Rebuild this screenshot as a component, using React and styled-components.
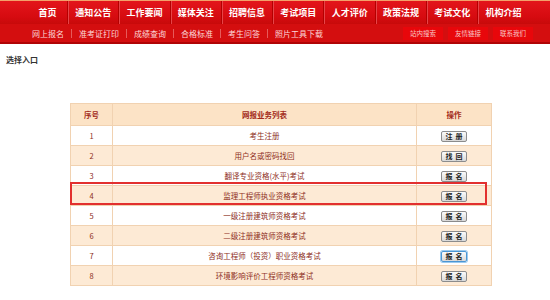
import React from 'react';
import styled, { createGlobalStyle } from 'styled-components';

const Global = createGlobalStyle`
  *, *::before, *::after { box-sizing: border-box; }
  html, body { margin: 0; padding: 0; background: #fff; }
  body { font-family: "Noto Sans CJK SC", "Noto Sans", sans-serif; }
`;

const Page = styled.div`
  width: 550px;
  height: 300px;
  overflow: hidden;
`;

const TopNav = styled.nav`
  height: 24px;
  border-top: 1px solid #f3a06a;
  background: linear-gradient(#e3151b, #d60b10 70%, #c70a0a);
  display: flex;
  align-items: stretch;
  padding-left: 28px;
`;

const NavItem = styled.a`
  width: ${p => p.$w || 51.3}px;
  flex: none;
  display: flex;
  align-items: center;
  justify-content: center;
  color: #fff;
  font-size: 9px;
  font-weight: bold;
  text-decoration: none;
  & + & {
    border-left: 1px solid #b40000;
    box-shadow: inset 1px 0 0 #e64448;
  }
`;

const SubNav = styled.div`
  height: 20px;
  background: #d40e0f;
  border-bottom: 2px solid #b00405;
  display: flex;
  align-items: center;
  padding: 0 17px 0 25px;
`;

const SubItem = styled.a`
  font-size: 8px;
  line-height: 9px;
  color: #fcd8d8;
  padding: 0 7px;
  text-decoration: none;
  & + & { border-left: 1px solid #e65a5a; }
`;

const QuickLinks = styled.div`
  margin-left: auto;
  display: flex;
  gap: 5px;
`;

const QuickLink = styled.a`
  width: 40px;
  height: 13px;
  background: #e8070b;
  color: #f8c6c6;
  font-size: 6.5px;
  display: flex;
  align-items: center;
  justify-content: center;
  text-decoration: none;
`;

const Title = styled.h2`
  margin: 0;
  padding: 11px 0 0 6px;
  font-size: 8px;
  line-height: 10px;
  font-weight: bold;
  color: #333;
`;

const TableWrap = styled.div`
  position: relative;
  width: 421px;
  margin: 38px 0 0 70px;
`;

const Table = styled.table`
  width: 421px;
  border-collapse: collapse;
  border: 1px solid #f1d2b1;
  table-layout: fixed;
`;

const Th = styled.th`
  height: 22px;
  padding: 0;
  background: #fce3c6;
  color: #a22a1a;
  font-size: 7.5px;
  font-weight: bold;
  text-align: center;
  border: 1px solid #f1d2b1;
`;

const Row = styled.tr`
  background: ${p => (p.$alt ? '#fdead5' : '#fff')};
`;

const Td = styled.td`
  height: 20px;
  padding: 0;
  color: #8d2e1c;
  font-size: 7.5px;
  text-align: center;
  border: 1px solid #f1d2b1;
`;

const ActionButton = styled.button`
  width: 26px;
  height: 11px;
  padding: 0 0 0 3px;
  font-family: inherit;
  font-size: 7px;
  line-height: 9px;
  font-weight: bold;
  letter-spacing: 3px;
  color: #222;
  border: 1px solid ${p => (p.$focus ? '#4a96d4' : '#8c8c8c')};
  border-radius: 2px;
  background: linear-gradient(#fbfbfb, #d9d9d9);
  box-shadow: ${p => (p.$focus ? '0 0 0 1px #9ccaee' : 'none')};
  vertical-align: middle;
`;

const Highlight = styled.div`
  position: absolute;
  left: 0;
  top: 79px;
  width: 417px;
  height: 23px;
  border: 2px solid #e2302f;
  pointer-events: none;
`;

const navItems = ['首页', '通知公告', '工作要闻', '媒体关注', '招聘信息', '考试项目', '人才评价', '政策法规', '考试文化', '机构介绍'];
const subItems = ['网上报名', '准考证打印', '成绩查询', '合格标准', '考生问答', '照片工具下载'];
const quick = ['站内搜索', '友情链接', '联系我们'];

const rows = [
  ['1', '考生注册', '注册'],
  ['2', '用户名或密码找回', '找回'],
  ['3', '翻译专业资格(水平)考试', '报名'],
  ['4', '监理工程师执业资格考试', '报名'],
  ['5', '一级注册建筑师资格考试', '报名'],
  ['6', '二级注册建筑师资格考试', '报名'],
  ['7', '咨询工程师（投资）职业资格考试', '报名'],
  ['8', '环境影响评价工程师资格考试', '报名'],
];

export default function App() {
  return (
    <Page>
      <Global />
      <TopNav>
        {navItems.map((n, i) => (
          <NavItem key={n} $w={i === 0 ? 39 : undefined}>{n}</NavItem>
        ))}
      </TopNav>
      <SubNav>
        {subItems.map(s => <SubItem key={s}>{s}</SubItem>)}
        <QuickLinks>
          {quick.map(q => <QuickLink key={q}>{q}</QuickLink>)}
        </QuickLinks>
      </SubNav>
      <Title>选择入口</Title>
      <TableWrap>
        <Table>
          <colgroup>
            <col style={{ width: 42 }} />
            <col style={{ width: 304 }} />
            <col style={{ width: 75 }} />
          </colgroup>
          <thead>
            <tr>
              <Th>序号</Th>
              <Th>网报业务列表</Th>
              <Th>操作</Th>
            </tr>
          </thead>
          <tbody>
            {rows.map(([no, name, act], i) => (
              <Row key={no} $alt={i % 2 === 1}>
                <Td>{no}</Td>
                <Td>{name}</Td>
                <Td><ActionButton $focus={no === '7'}>{act}</ActionButton></Td>
              </Row>
            ))}
          </tbody>
        </Table>
        <Highlight />
      </TableWrap>
    </Page>
  );
}
